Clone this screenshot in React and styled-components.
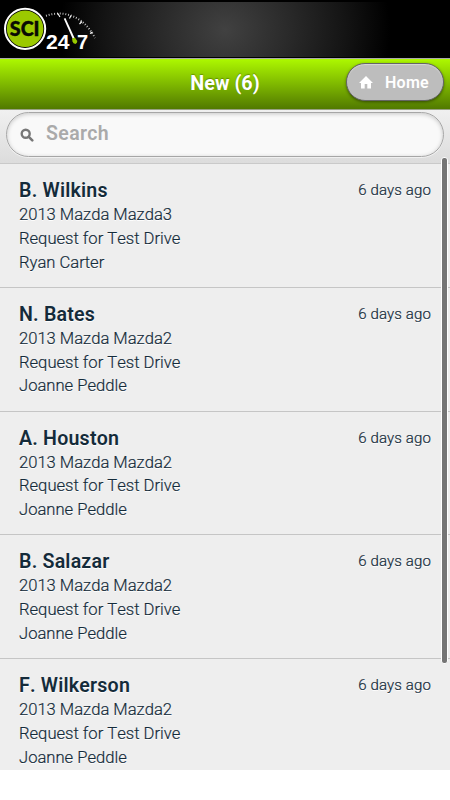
import React from "react";
import styled, { createGlobalStyle } from "styled-components";

const GlobalStyle = createGlobalStyle`
  * { box-sizing: border-box; }
  body { margin: 0; background: #fff; font-family: Roboto, "Liberation Sans", sans-serif; }
`;

const Screen = styled.div`
  position: relative;
  width: 450px;
  height: 770px;
  overflow: hidden;
  background: #eee;
`;

const Banner = styled.header`
  height: 58px;
  border-top: 2px solid #000;
  border-bottom: 1px solid #000;
  background: radial-gradient(ellipse 165px 150px at 225px 28px, #414141 0%, #292929 40%, #141414 73%, #000 100%) #000;
`;

const Logo = styled.svg`
  display: block;
  margin-top: -2px;
`;

const TitleBar = styled.div`
  display: flex;
  align-items: flex-start;
  height: 52px;
  border-top: 1px solid #aaa;
  border-bottom: 1px solid #98a183;
  background: linear-gradient(#adf800, #517900);
`;

const Title = styled.h1`
  flex: 1;
  margin: 0 0 0 104px;
  text-align: center;
  font-size: 19.8px;
  line-height: 50px;
  font-weight: 700;
  color: #fff;
  text-shadow: 0 -1px 1px rgba(60, 90, 0, 0.5);
`;

const HomeButton = styled.button`
  display: flex;
  align-items: center;
  width: 98px;
  height: 38px;
  margin: 4px 6px 0 0;
  padding: 0 0 0 12px;
  border: 1px solid #656565;
  border-radius: 19px;
  background: #bdbdbd;
  color: #fff;
  font: 600 16px/38px Roboto, sans-serif;
  letter-spacing: 0.25px;
  box-shadow: 0 1px 3px rgba(0, 0, 0, 0.45), inset 0 1px 1px #d6d6d6;
  gap: 12px;
`;

const HomeLabel = styled.span`
  padding-top: 1px;
`;

const SearchBar = styled.div`
  height: 54px;
  padding: 2px 6px 0;
  border-bottom: 1px solid #c9c9c9;
  background: linear-gradient(#f0f0f0, #dcdcdc);
`;

const SearchField = styled.div`
  display: flex;
  align-items: center;
  gap: 12px;
  height: 45px;
  padding-left: 13px;
  border: 1px solid #a6a6a6;
  border-radius: 23px;
  background: #f9f9f9;
  box-shadow: inset 0 1px 4px rgba(0, 0, 0, 0.2), 0 1px 0 #f0f0f0;
`;

const Placeholder = styled.span`
  margin-top: -3px;
  color: #aaa;
  font-size: 19.5px;
  font-weight: 600;
  letter-spacing: 0.4px;
`;

const List = styled.ul`
  margin: 0;
  padding: 0;
  list-style: none;
`;

const Row = styled.li`
  display: flex;
  justify-content: space-between;
  height: 123.75px;
  padding: 14px 19px 0;
  border-bottom: 1px solid #c5c5c5;
  color: #142b3a;
  text-shadow: 0 1px 0 #fff;
  font-kerning: none;
`;

const Name = styled.h2`
  margin: 0;
  padding-top: 1px;
  font-size: 19.6px;
  line-height: 24px;
  font-weight: 650;
  letter-spacing: 0.2px;
`;

const Detail = styled.p`
  margin: 0;
  font-size: 16.6px;
  font-weight: 350;
  line-height: 23.85px;
  -webkit-text-stroke: 0.2px currentColor;
`;

const Age = styled.time`
  font-size: 15px;
  font-weight: 350;
  line-height: 24px;
  letter-spacing: 0.12px;
  -webkit-text-stroke: 0.2px currentColor;
`;

const ScrollThumb = styled.div`
  position: absolute;
  top: 157px;
  left: 441px;
  width: 7px;
  height: 507px;
  border: 1px solid #fff;
  border-radius: 3px;
  background: #757575;
`;

const leads = [
  ["B. Wilkins", "2013 Mazda Mazda3", "Ryan Carter"],
  ["N. Bates", "2013 Mazda Mazda2", "Joanne Peddle"],
  ["A. Houston", "2013 Mazda Mazda2", "Joanne Peddle"],
  ["B. Salazar", "2013 Mazda Mazda2", "Joanne Peddle"],
  ["F. Wilkerson", "2013 Mazda Mazda2", "Joanne Peddle"],
];

function BrandLogo() {
  return (
    <Logo width="110" height="56" viewBox="0 0 110 56">
      <circle cx="25.1" cy="28.8" r="20.1" fill="#000" stroke="#fff" strokeWidth="2" />
      <circle cx="25.1" cy="28.8" r="18.3" fill="#9bc900" />
      <text x="9.8" y="35.9" fontFamily="Lato, sans-serif" fontWeight="900" fontSize="20" textLength="29.8" lengthAdjust="spacingAndGlyphs" fill="#080a03" stroke="#080a03" strokeWidth="0.4">SCI</text>
      <path d="M46 15.8C63 10 83 15 95 38" fill="none" stroke="#ccc" strokeWidth="2" strokeDasharray="0.9 1.9" />
      <path d="M57.5 13l2.5 4M71 15.5l-1.5 3M82 21.5l-2.5 2.5M92.5 32l-2.5 1.5" stroke="#fff" strokeWidth="1.1" />
      <path d="M63.8 18.8l1.6-.7 9.2 20-1.8.8z" fill="#fff" />
      <path d="M72 38.8l2.8-1.2 2.5 3.4q.1 2.2-1.8 2.9-2.4-.2-3-2.3z" fill="#98c900" />
      <text x="46" y="49.4" fontFamily="Liberation Sans, sans-serif" fontWeight="700" fontSize="20" textLength="23.5" lengthAdjust="spacingAndGlyphs" fill="#fff">24</text>
      <text x="77" y="49.4" fontFamily="Liberation Sans, sans-serif" fontWeight="700" fontSize="20" fill="#fff">7</text>
    </Logo>
  );
}

export default function App() {
  return (
    <>
      <GlobalStyle />
      <Screen>
        <Banner><BrandLogo /></Banner>
        <TitleBar>
          <Title>New (6)</Title>
          <HomeButton>
            <svg width="14" height="13" viewBox="0 0 14 13">
              <path d="M7 0L0 7h2v5.5h3.7V8h2.6v4.5H12V7h2z" fill="#fff" />
            </svg>
            <HomeLabel>Home</HomeLabel>
          </HomeButton>
        </TitleBar>
        <SearchBar>
          <SearchField>
            <svg width="14" height="14" viewBox="0 0 14 14" fill="none" stroke="#777">
              <circle cx="5.7" cy="5.7" r="4" strokeWidth="2.4" />
              <path d="M8.8 8.8l3.5 3.5" strokeWidth="2.6" strokeLinecap="round" />
            </svg>
            <Placeholder>Search</Placeholder>
          </SearchField>
        </SearchBar>
        <List>
          {leads.map(([name, vehicle, agent]) => (
            <Row key={name}>
              <div>
                <Name>{name}</Name>
                <Detail>{vehicle}</Detail>
                <Detail>Request for Test Drive</Detail>
                <Detail>{agent}</Detail>
              </div>
              <Age>6 days ago</Age>
            </Row>
          ))}
        </List>
        <ScrollThumb />
      </Screen>
    </>
  );
}
